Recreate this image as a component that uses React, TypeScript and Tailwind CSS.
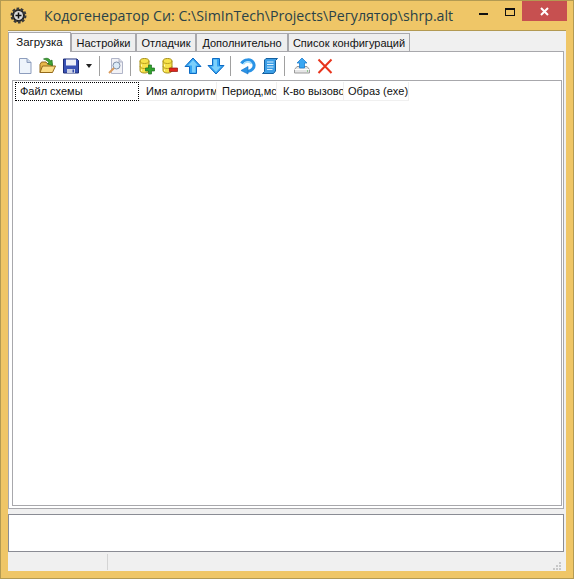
const tabs = [
  { label: "Настройки", width: "w-[65px]" },
  { label: "Отладчик", width: "w-[60px]" },
  { label: "Дополнительно", width: "w-[92px]" },
  { label: "Список конфигураций", width: "w-[122px]" },
];

const columns = [
  { label: "Имя алгоритма", width: "w-[78px]", pad: "pl-[7px]" },
  { label: "Период,мс", width: "w-[60px]", pad: "pl-[5px]" },
  { label: "К-во вызовов", width: "w-[67px]", pad: "pl-[6px]" },
  { label: "Образ (exe)", width: "w-[65px]", pad: "pl-[4px]" },
];

function Icon({ children, className = "w-[23px]" }: { children: React.ReactNode; className?: string }) {
  return (
    <div className={`flex h-[22px] shrink-0 items-center justify-center ${className}`}>
      <svg width="18" height="18" viewBox="0 0 18 18">
        {children}
      </svg>
    </div>
  );
}

function Separator() {
  return <div className="mx-[3px] h-[20px] w-px shrink-0 bg-[#a0a0a0]" />;
}

function Barrels() {
  return (
    <>
      <path d="M2 4C2 2.300 4 1.500 6.500 1.500S11 2.300 11 4V13.500c0 1.700-2 2.500-4.500 2.500S2 15.200 2 13.500Z" fill="#f7e24a" stroke="#a58e1a" />
      <path d="M2 4c0 1.700 2 2.500 4.500 2.500S11 5.700 11 4M2 9c0 1.700 2 2.500 4.500 2.500S11 10.700 11 9" fill="none" stroke="#b89f20" />
      <path d="M3.500 7.500V9.500M3.500 12.500V14" stroke="#fff8b8" />
    </>
  );
}

function Arrow({ down = false }: { down?: boolean }) {
  return (
    <g transform={down ? "rotate(180 9 9)" : undefined}>
      <path d="M9 1 17 9.500H12.500V16.500H5.500V9.500H1Z" fill="#35a4f2" stroke="#0d6bc4" strokeLinejoin="round" />
      <path d="M9 3 14 8.500H11.500V15.500H8V8.500H4Z" fill="#7cd0fb" />
    </g>
  );
}

function Toolbar() {
  return (
    <div className="flex h-[28px] items-center pl-[4px]">
      <Icon>
        <path d="M3.500 1.500H11L15 5.500V16.500H3.500Z" fill="#eef4fb" stroke="#8d9dbd" />
        <path d="M11 1.500V5.500H15" fill="#c9d6e8" stroke="#8d9dbd" />
      </Icon>
      <Icon>
        <path d="M1 7.500 2.500 5H7L8 6.500H13V15.500H1Z" fill="#e8b84a" stroke="#94691a" />
        <path d="M1 15.500 3.500 9H16.500L13.500 15.500Z" fill="#fbdc85" stroke="#94691a" />
        <path d="M4.500 2C8 .5 10.500 1.500 11.500 4L13 3 13.500 8.500 8.500 7 10 6C9 4 7.500 3 4.500 2Z" fill="#3fa535" stroke="#1f6d1c" strokeWidth=".7" />
      </Icon>
      <Icon>
        <path d="M1.500 2H15L16.500 3.500V16H1.500Z" fill="#3a52b4" stroke="#1d2c75" />
        <path d="M4 2.500H14V8.500H4Z" fill="#eef0f8" />
        <path d="M5 12H13V16H5Z" fill="#cdd3e6" />
        <path d="M10.500 12.500H12V15.500H10.500Z" fill="#2f47a8" />
      </Icon>
      <div className="flex h-[22px] w-[14px] shrink-0 items-center justify-center">
        <div className="h-0 w-0 border-x-[3.500px] border-t-[4px] border-x-transparent border-t-[#222222]" />
      </div>
      <Separator />
      <Icon className="ml-[1px] w-[23px]">
        <path d="M4.500 1.500H12L15.500 5V16.500H4.500Z" fill="#f2f2f6" stroke="#b0b5c8" />
        <path d="M12 1.500V5H15.500" fill="#d5d8e4" stroke="#b0b5c8" />
        <circle cx="9.500" cy="8.500" r="3.500" fill="#dcebf7" stroke="#7e8fa8" />
        <path d="M7 11 2 16" stroke="#d99a5b" strokeWidth="2" />
      </Icon>
      <Separator />
      <Icon className="ml-[1px] w-[23px]">
        <Barrels />
        <path d="M10.500 8H13.500V11H16.500V14H13.500V17H10.500V14H7.500V11H10.500Z" fill="#31a32f" stroke="#1c6f1e" strokeWidth=".7" />
      </Icon>
      <Icon>
        <Barrels />
        <path d="M8.500 11H16.500V14.500H8.500Z" fill="#e0261c" stroke="#8f1410" strokeWidth=".7" />
      </Icon>
      <Icon>
        <Arrow />
      </Icon>
      <Icon>
        <Arrow down />
      </Icon>
      <Separator />
      <Icon className="ml-[1px] w-[23px]">
        <path d="M3.500 6.500C6 2 13 1.500 15.500 6 17.500 10.500 13.500 15 8.500 14" fill="none" stroke="#2a93e6" strokeWidth="3" />
        <path d="M5.500 7.500C7 4.500 12 4 13.500 7" fill="none" stroke="#a5e0fc" strokeWidth="1.500" />
        <path d="M10 9.500V17L3 13.500Z" fill="#2c94e6" stroke="#0d6bc4" strokeWidth=".6" />
      </Icon>
      <Icon>
        <path d="M5 1.500H16.500L14.500 3.500V14L12.500 16.500H1.500L3.500 14.500V3Z" fill="#3b9ee6" stroke="#15609f" />
        <path d="M6 5H12.500M6 7.500H12.500M6 10H12.500M6 12.500H11.500" stroke="#d8f0ff" />
      </Icon>
      <Separator />
      <Icon className="ml-[2px] w-[23px]">
        <path d="M1.500 12.500 4 9.500H14L16.500 12.500V16H1.500Z" fill="#e5e5e5" stroke="#9a9a9a" />
        <path d="M1.500 12.500H16.500" stroke="#ffffff" />
        <path d="M14 13.500H15V14.500H14Z" fill="#39a83a" />
        <path d="M9 1 14 6H11.500V11H6.500V6H4Z" fill="#3aa7f2" stroke="#1273c6" strokeWidth=".7" />
      </Icon>
      <Icon>
        <path d="M2.500 2.500 15.500 16M15.500 2.500 2.500 16" stroke="#e8341c" strokeWidth="2" />
      </Icon>
    </div>
  );
}

function FileTable() {
  return (
    <div className="mb-[2px] ml-[3px] mr-[1px] min-h-0 flex-1 border border-[#a8a8ac] bg-white pl-[2px] pt-px">
      <div className="flex h-[19px] w-fit text-[11px] leading-[17px] text-[#111111]">
        <div className="w-[124px] border border-dotted border-black pl-[4px]">Файл схемы</div>
        {columns.map((col) => (
          <div key={col.label} className={`overflow-hidden whitespace-nowrap border-r border-b border-[#f0f0f0] pt-px ${col.width} ${col.pad}`}>
            {col.label}
          </div>
        ))}
      </div>
    </div>
  );
}

export default function App() {
  return (
    <div className="flex h-[579px] w-[574px] flex-col border border-[#b39a52] bg-[#efc667] font-['Liberation_Sans',sans-serif]">
      <div className="flex h-[29px] shrink-0 items-start">
        <div className="ml-[9px] mt-[6px] flex h-[17px] w-[17px] items-center justify-center">
          <svg width="17" height="17" viewBox="0 0 17 17">
            <circle cx="8.500" cy="8.500" r="6.500" fill="#1c1c1c" stroke="#3a3a3a" strokeWidth="3" strokeDasharray="2.500 1.500" />
            <circle cx="8.500" cy="8.500" r="4.500" fill="#dcdcdc" />
            <path d="M8.500 5.500v6M5.500 8.500h6" stroke="#111111" strokeWidth="1.500" />
          </svg>
        </div>
        <div className="ml-[17px] mt-[5px] whitespace-nowrap font-['Open_Sans',sans-serif] text-[14.200px] leading-[20px] text-[#2a4248]">
          Кодогенератор Си: C:\SimInTech\Projects\Регулятор\shrp.alt
        </div>
        <div className="ml-auto mr-[6px] flex items-start">
          <div className="mr-[17px] mt-[12px] h-[2px] w-[9px] bg-[#111111]" />
          <div className="mr-[7px] mt-[7px] h-[8px] w-[10px] border border-t-2 border-[#111111]" />
          <div className="flex h-[20px] w-[45px] items-center justify-center bg-[#c75050]">
            <svg width="9" height="9" viewBox="0 0 9 9">
              <path d="M1 1 8 8M8 1 1 8" stroke="#ffffff" strokeWidth="2" />
            </svg>
          </div>
        </div>
      </div>
      <div className="mx-[7px] mb-[7px] flex min-h-0 flex-1 flex-col border-t border-[#b39a52] bg-[#f0f0f0] pr-[2px]">
        <div className="flex h-[20px] shrink-0 items-end text-[11px] text-[#111111]">
          <div className="relative z-10 -mb-px flex h-[20px] w-[63px] justify-center border-x border-t border-[#a8a8ac] bg-white pt-[2px] text-[11.500px] leading-[14px]">
            Загрузка
          </div>
          {tabs.map((tab) => (
            <div key={tab.label} className={`flex h-[18px] items-center justify-center border border-b-0 border-[#a8a8ac] bg-[#eeeeee] pt-px ${tab.width}`}>
              {tab.label}
            </div>
          ))}
        </div>
        <div className="flex h-[458px] shrink-0 flex-col border border-[#a8a8ac] bg-white">
          <Toolbar />
          <FileTable />
        </div>
        <div className="mt-[5px] h-[38px] shrink-0 border border-[#8a8c94] bg-white" />
        <div className="flex min-h-0 flex-1 items-center">
          <div className="ml-[99px] h-[16px] w-px bg-[#d4d4d4]" />
          <div className="ml-auto mb-[-8px] mr-[3px] grid grid-cols-3 gap-px">
            <div />
            <div />
            <div className="h-[2px] w-[2px] bg-[#c8c8c8]" />
            <div />
            <div className="h-[2px] w-[2px] bg-[#c8c8c8]" />
            <div className="h-[2px] w-[2px] bg-[#c8c8c8]" />
            <div className="h-[2px] w-[2px] bg-[#c8c8c8]" />
            <div className="h-[2px] w-[2px] bg-[#c8c8c8]" />
            <div className="h-[2px] w-[2px] bg-[#c8c8c8]" />
          </div>
        </div>
      </div>
    </div>
  );
}
